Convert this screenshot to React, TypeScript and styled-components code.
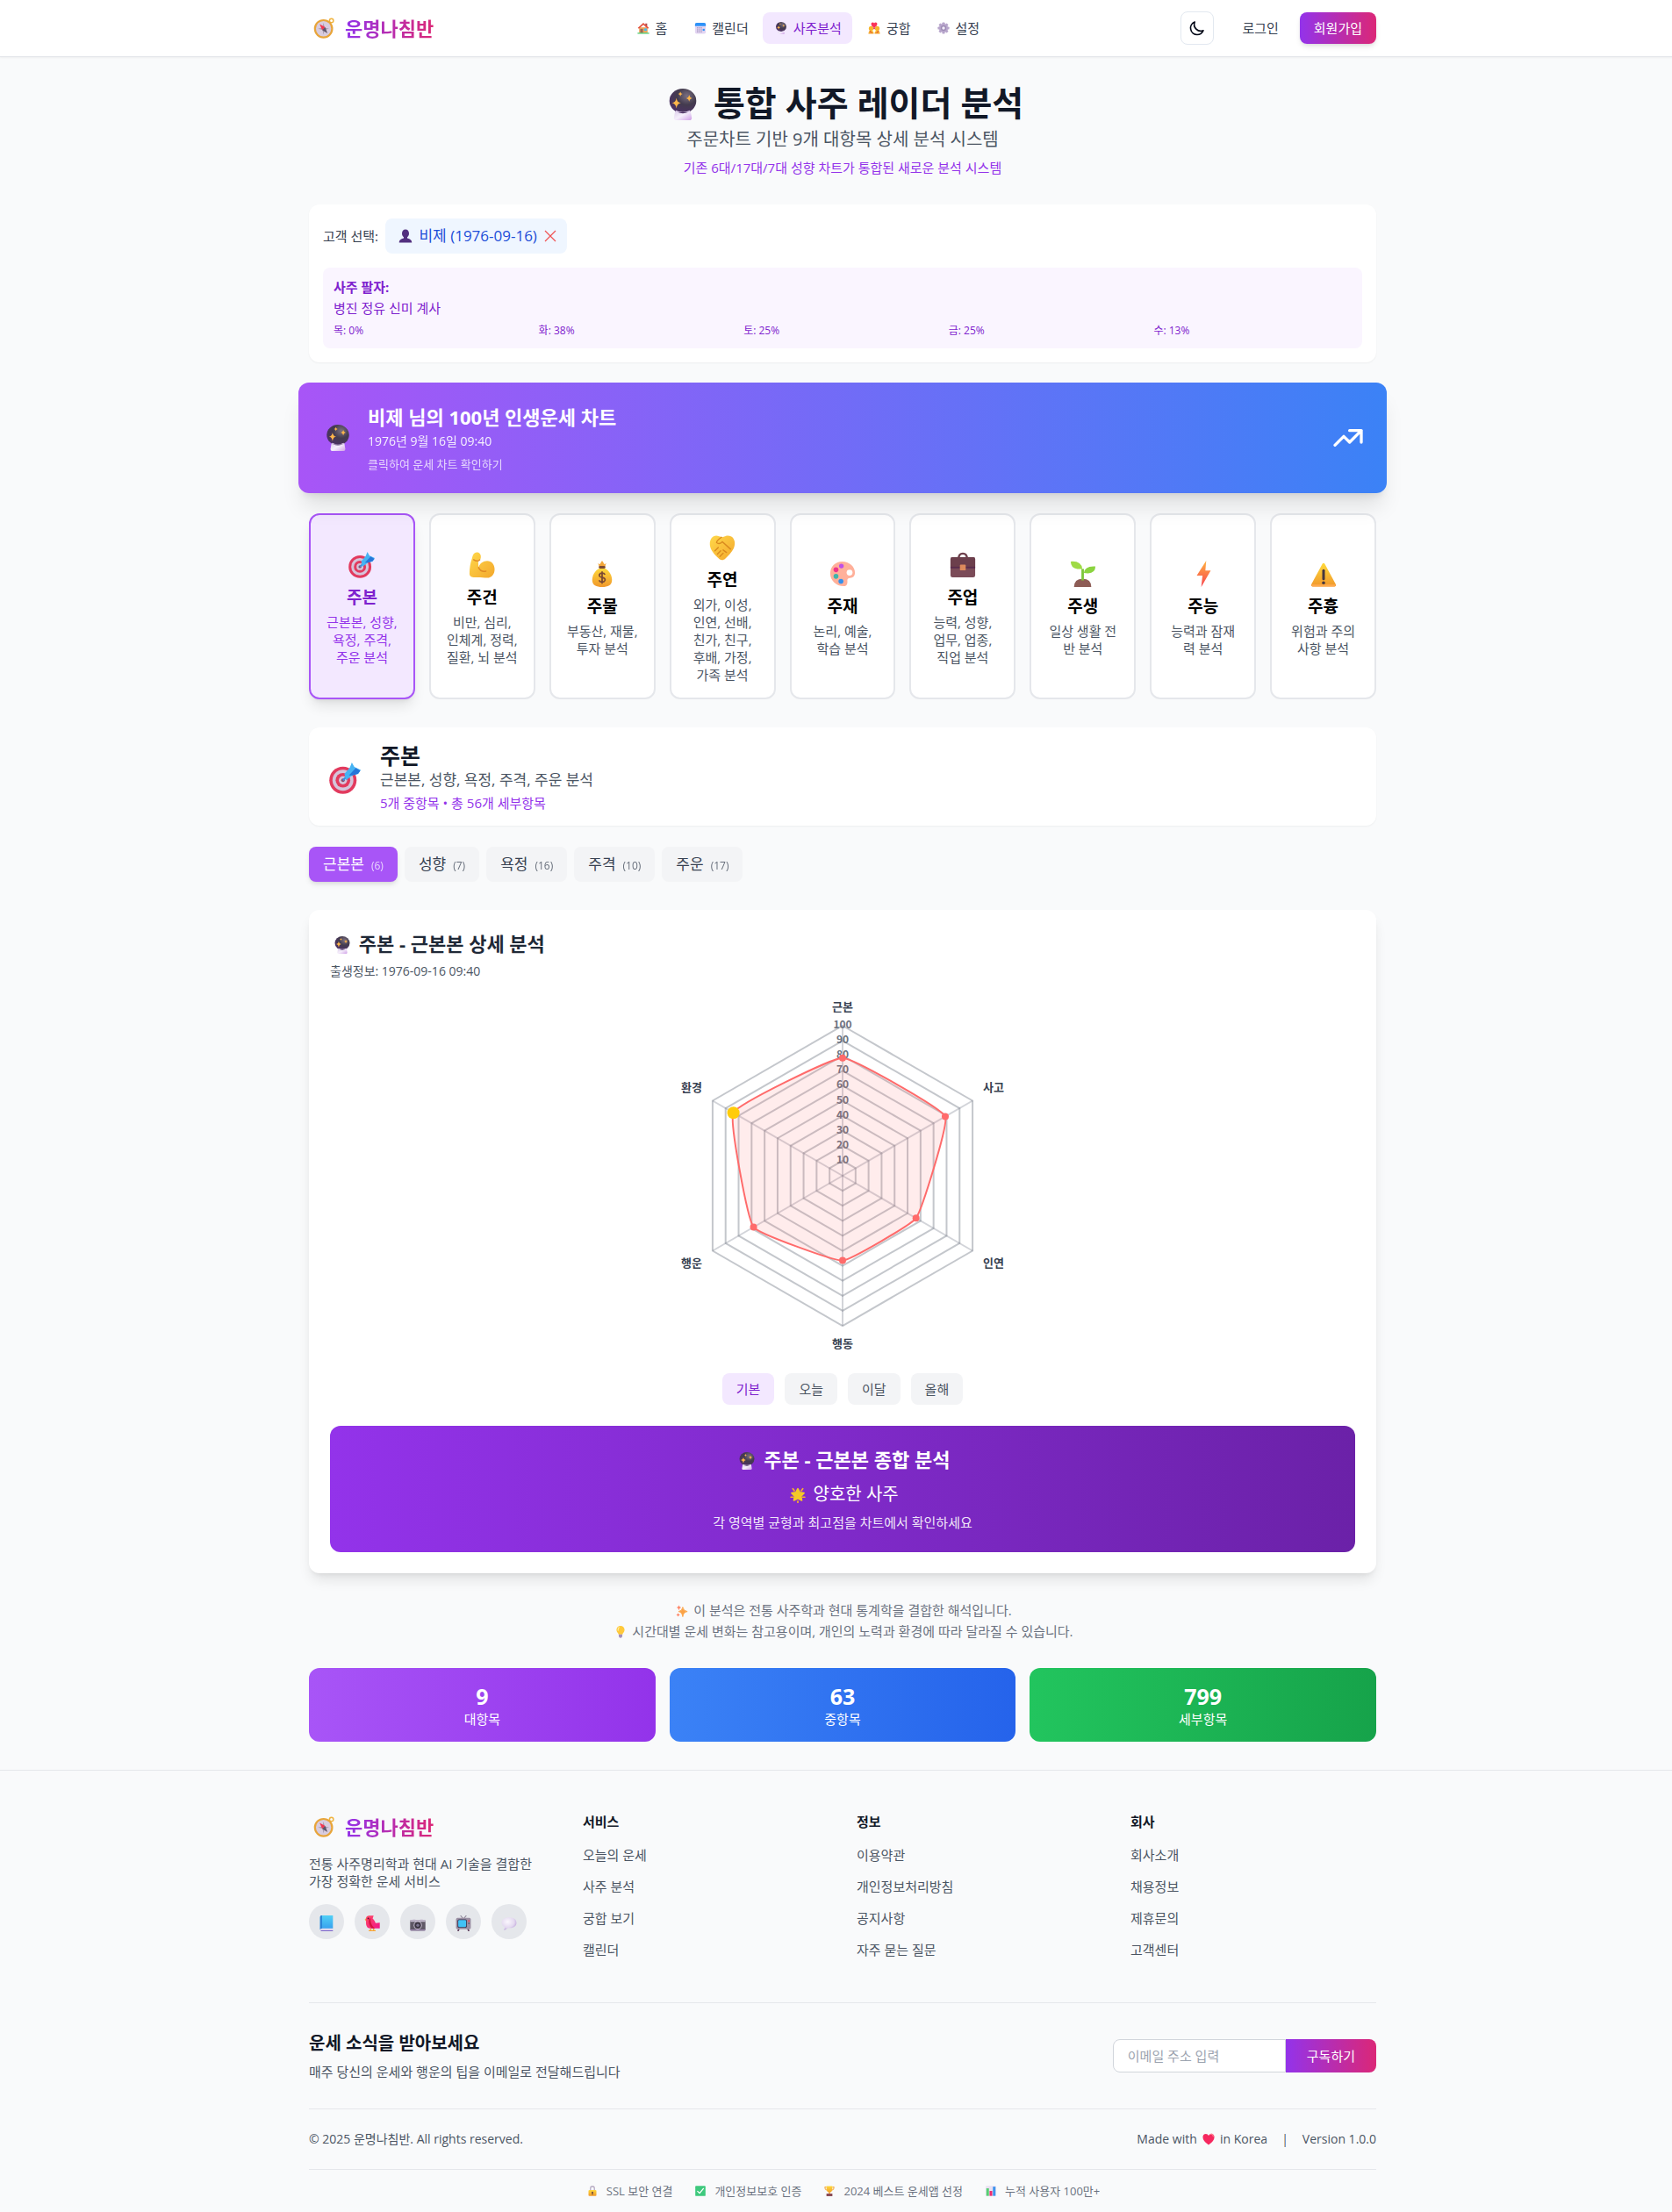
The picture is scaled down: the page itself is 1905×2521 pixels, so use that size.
import React from "react";
import styled, { createGlobalStyle, css } from "styled-components";

const sans = `"Open Sans", "Noto Sans CJK KR", sans-serif`;

const GlobalStyle = createGlobalStyle`
  *, *::before, *::after { box-sizing: border-box; }
  body {
    margin: 0;
    background: #f9fafb;
    color: #111827;
    font-family: ${sans};
    font-size: 16px;
    line-height: 24px;
    overflow-x: hidden;
  }
  h1, h2, h3, h4, p, ul { margin: 0; padding: 0; }
  ul { list-style: none; }
  a { color: inherit; text-decoration: none; }
  button, input { font: inherit; color: inherit; margin: 0; }
  button { border: 0; background: none; padding: 0; cursor: pointer; }
`;

/* ---------- emoji artwork (32 x 32 grid) ---------- */

const Defs = () => (
  <HiddenSvg aria-hidden="true">
    <defs>
      <radialGradient id="gBall" cx="0.65" cy="0.3" r="0.8">
        <stop offset="0" stopColor="#7a6f80" />
        <stop offset="0.45" stopColor="#433b4e" />
        <stop offset="1" stopColor="#4e2f69" />
      </radialGradient>
      <linearGradient id="gBase" x1="0" x2="1" y1="0" y2="1">
        <stop offset="0" stopColor="#d9c9e8" />
        <stop offset="0.5" stopColor="#f5effb" />
        <stop offset="1" stopColor="#cf9ee6" />
      </linearGradient>
      <linearGradient id="gGold" x1="0" x2="0" y1="0" y2="1">
        <stop offset="0" stopColor="#ffd93b" />
        <stop offset="1" stopColor="#f0982c" />
      </linearGradient>
      <linearGradient id="gYellow" x1="0" x2="1" y1="0" y2="1">
        <stop offset="0" stopColor="#ffd84a" />
        <stop offset="1" stopColor="#f3a72c" />
      </linearGradient>
      <linearGradient id="gBolt" x1="0" x2="0" y1="0" y2="1">
        <stop offset="0" stopColor="#ffb340" />
        <stop offset="1" stopColor="#f8424f" />
      </linearGradient>
      <linearGradient id="gBook" x1="0" x2="0" y1="0" y2="1">
        <stop offset="0" stopColor="#51d0f5" />
        <stop offset="1" stopColor="#359dee" />
      </linearGradient>
      <linearGradient id="gPink" x1="0" x2="1" y1="0" y2="1">
        <stop offset="0" stopColor="#ff4b63" />
        <stop offset="1" stopColor="#f0148a" />
      </linearGradient>
      <radialGradient id="gLilac" cx="0.4" cy="0.35" r="0.75">
        <stop offset="0" stopColor="#faf7fd" />
        <stop offset="0.6" stopColor="#e4d9f0" />
        <stop offset="1" stopColor="#b294d6" />
      </radialGradient>
    </defs>
  </HiddenSvg>
);

const art = {
  compass: (
    <>
      <circle cx="27.5" cy="4.5" r="3" fill="none" stroke="#f0b440" strokeWidth="2" />
      <circle cx="15.5" cy="17" r="14.5" fill="#e8a53a" />
      <circle cx="15.5" cy="17" r="11.6" fill="#d8ccdf" />
      <path d="M15.5 8l1.6 7.4L24 17l-6.900 1.600L15.500 26l-1.600-7.400L7 17l6.900-1.600z" fill="#a79bb0" />
      <path d="M9.500 10l8.500 4.500-4.500 4.500z" fill="#f2354f" />
      <path d="M21.500 24l-8-5 4.500-4.500z" fill="#5d5468" />
    </>
  ),
  house: (
    <>
      <path d="M21 4h5v8h-5z" fill="#b24a4a" />
      <path d="M5 14h22v15H5z" fill="#f0a75c" />
      <path d="M16 2L1.500 15.500l3 2L16 7.500l11.500 10 3-2z" fill="#e2503e" />
      <path d="M8 18h7v11H8z" fill="#9a6a58" />
      <path d="M18 17h7v6h-7z" fill="#43b9f4" />
      <path d="M1 28h30v3H1z" fill="#4fce74" />
    </>
  ),
  calendar: (
    <>
      <rect x="2" y="2" width="28" height="29" rx="4" fill="#e3d5f2" />
      <path d="M2 11V6a4 4 0 014-4h20a4 4 0 014 4v5z" fill="#2d92f8" />
      <g fill="#a596bd">
        {[14, 19, 24].map((y) => [8, 13, 18].map((x) => <rect key={`${x}-${y}`} x={x - 1} y={y} width="3" height="3" />))}
      </g>
      <rect x="22" y="18" width="5" height="5" fill="#2d92f8" />
    </>
  ),
  ball: (
    <>
      <path d="M8.500 21h15l1.500 8.500q0 2.500-2 2.500H9q-2 0-2-2.500z" fill="url(#gBase)" />
      <ellipse cx="16" cy="12.500" rx="13.600" ry="12.500" fill="url(#gBall)" />
      <path d="M9 22q7 3.500 14 0l.5 2h-15z" fill="#dccde9" />
      <path d="M9.500 9.500q.6 4.400 4.500 5-3.900.7-4.500 5.500-.7-4.800-4.500-5.500 3.800-.6 4.500-5z" fill="#fdb54a" />
      <path d="M22.500 6.500q.4 2.700 3 3.200-2.600.5-3 3.300-.5-2.800-3-3.300 2.500-.5 3-3.200z" fill="#fdb54a" />
      <path d="M13.500 3q.3 2 2.200 2.400-1.900.4-2.200 2.400-.4-2-2.200-2.400Q13.100 5 13.500 3z" fill="#fdb54a" />
    </>
  ),
  couple: (
    <>
      <circle cx="8" cy="17" r="6" fill="#f7b52c" />
      <circle cx="24" cy="17" r="6" fill="#f7b52c" />
      <path d="M1 31q0-9 7-9t7 9zM17 31q0-9 7-9t7 9z" fill="url(#gGold)" />
      <path d="M4 23l6 5M28 23l-6 5" stroke="#e6542f" strokeWidth="2.500" />
      <path d="M16 15Q8 10 8 5.500 8 1 12 1q3 0 4 2.500Q17 1 20 1q4 0 4 4.500 0 4.500-8 9.500z" fill="#fa3158" />
      <path d="M14 14h4v5h-4z" fill="#e0335a" />
    </>
  ),
  gear: (
    <>
      <g fill="#b7a5cb">
        {[0, 45, 90, 135].map((a) => (
          <rect key={a} x="12.500" y="1" width="7" height="30" rx="2" transform={`rotate(${a} 16 16)`} />
        ))}
        <circle cx="16" cy="16" r="11.500" />
      </g>
      <circle cx="16" cy="16" r="7" fill="#9a88b2" />
      <circle cx="16" cy="16" r="4" fill="#f2ecf8" />
    </>
  ),
  bust: (
    <path d="M16 1c5 0 8 3.500 8 9 0 4-1.500 7-4 8.500V21c6 1.500 10.500 4 10.500 10h-29c0-6 4.500-8.500 10.500-10v-2.500C9.500 17 8 14 8 10c0-5.500 3-9 8-9z" fill="#53307f" />
  ),
  target: (
    <>
      <circle cx="14" cy="18" r="13.800" fill="#e23a5e" />
      <circle cx="14" cy="18" r="10.600" fill="#d5c4da" />
      <circle cx="14" cy="18" r="7.400" fill="#e23a5e" />
      <circle cx="14" cy="18" r="4.200" fill="#d5c4da" />
      <circle cx="14" cy="18" r="1.800" fill="#8c4f6c" />
      <path d="M14 18L25 7" stroke="#3a8ce0" strokeWidth="2" />
      <path d="M15.500 11.500L21 5l2-5 2.500 4.500L32 7.500l-2.500 4-6 1.500-6.500 5z" fill="#47b3f3" />
      <path d="M20 13l7-7.500 4.500 3-2.500 3-5.500 1.500z" fill="#2676d9" />
    </>
  ),
  biceps: (
    <>
      <path d="M7 1.500C9 0 12 .5 13.500 2c1.500 1.500 1.500 4 1 6-.5 1.500-1.500 2-3 2L12 19c1.500-5 5.500-8 10.500-8 5.500 0 9 4.500 9 10 0 6-3.500 10.500-9 10.500-5 0-9-1-14-.5-4.500.3-7.500-1-7.500-4.500C1 20 2 13.500 4 8c.6-3 1.300-5.200 3-6.500z" fill="url(#gYellow)" />
      <path d="M12 19c2 4 5 5.500 9 4.500M6 9.500c3 2 5.500 2 7.500 0" stroke="#e08a25" strokeWidth="1.500" fill="none" strokeLinecap="round" />
    </>
  ),
  moneybag: (
    <>
      <path d="M11 3l2 1.500L16 0l3 4.500L21 3l-2 6h-6z" fill="#f2a63a" />
      <path d="M13 9C7 12 4 18 4 23.500 4 30 9 32 16 32s12-2 12-8.500C28 18 25 12 19 9z" fill="url(#gGold)" />
      <rect x="12" y="6.500" width="8" height="3" rx="1.500" fill="#7b4a33" />
      <path d="M19.500 17q-1-2-3.500-2t-3.300 2q-.7 2.700 3.300 3.400 4.300.8 3.500 3.400-1 2.200-3.500 2.200t-3.700-2.200M16 13v15" fill="none" stroke="#7b4a33" strokeWidth="1.900" />
    </>
  ),
  handshake: (
    <>
      <path d="M2.500 5C5 1.500 9 1 12 2.500l4 1 4-1.500c4-1 8.500.5 10 4 2 4 1 8.500-.5 11.500-2 4-6 8-10 12-2 2-5 2-7 .5C8 26.500 3 21 1.500 16 .3 12 .6 8 2.500 5z" fill="url(#gYellow)" />
      <path d="M15 3.500q-6 4-6 6.500 3 3 7-1l10 9M7 20l4-4M10 24l4-4M13 27l4-4M21 22l-4-3" stroke="#d98a1f" strokeWidth="1.500" fill="none" strokeLinecap="round" />
    </>
  ),
  palette: (
    <>
      <path d="M15.500 1C24 1 31 7 31 14.500c0 4.500-2.500 6.500-6 6.500-2.500 0-3.500 1.500-3.200 3.500.3 3-.3 6.500-4.300 6.500C8 31 1 24 1 15.500 1 7 7.500 1 15.500 1z" fill="#ffb09a" />
      <circle cx="24.500" cy="14.500" r="3.600" fill="#fff" />
      <circle cx="14.500" cy="6.500" r="2.900" fill="#c04fe8" />
      <circle cx="8" cy="11" r="3" fill="#f0358c" />
      <circle cx="8" cy="19" r="3" fill="#3fb4ab" />
      <circle cx="14" cy="25" r="3" fill="#3290ee" />
    </>
  ),
  briefcase: (
    <>
      <path d="M11 8q0-6 5-6t5 6" fill="none" stroke="#6e404c" strokeWidth="2.500" />
      <rect x="1" y="6.500" width="30" height="24.500" rx="2.500" fill="#7b4b58" />
      <path d="M1 9q0-2.500 2.500-2.500h25Q31 6.500 31 9v10H1z" fill="#6c3f4c" />
      <path d="M1 18h30v2H1z" fill="#5a2c4d" />
      <rect x="12.500" y="15.500" width="7" height="7" rx="1" fill="#dd8a5c" />
    </>
  ),
  seedling: (
    <>
      <path d="M5 32q0-10 10.500-10T26 32z" fill="#8d5c55" />
      <path d="M14 24V10h3v14z" fill="#7cc63a" />
      <path d="M15 10Q14 0 1 1q0 8 8 9z" fill="#9fdb45" />
      <path d="M17 15q1-9 14-8 0 8-9 8.500z" fill="#8bd440" />
    </>
  ),
  bolt: <path d="M19.500 0L8 18h7l-1.500 14L25 12h-6.500z" fill="url(#gBolt)" />,
  warning: (
    <>
      <path d="M16 3q1 0 1.500 1L31 29q.7 2-1.500 2.500h-27Q.3 31 1 29L14.500 4Q15 3 16 3z" fill="url(#gGold)" />
      <path d="M1.500 29h29q.5 2.500-1.500 2.500H3Q1 31.500 1.500 29z" fill="#ffab4f" />
      <path d="M16 12v10" stroke="#44363f" strokeWidth="3.200" strokeLinecap="round" />
      <circle cx="16" cy="27" r="1.900" fill="#44363f" />
    </>
  ),
  star: (
    <>
      <g stroke="#f6ae2e" strokeWidth="3" strokeLinecap="round">
        <path d="M6 3l3 4M26 3l-3 4M2 20h4M30 20h-4M16 31v-3" />
      </g>
      <path d="M16 3l4 7.500 8.500 1.300-6 6.200 1.500 8.500-8-4-8 4 1.500-8.500-6-6.200 8.500-1.300z" fill="#f4c928" stroke="#f4c928" strokeWidth="3" strokeLinejoin="round" />
    </>
  ),
  sparkles: (
    <>
      <path d="M18 6q1.500 10 12 11.500Q19.500 19 18 31q-1.500-12-11-13.500Q16.500 16 18 6z" fill="#fba346" stroke="#fba346" strokeWidth="2" />
      <path d="M8 1q1 5 6 6-5 1-6 7-1-6-6-7 5-1 6-6zM6 21q.7 4 5 5-4.300.8-5 5-.7-4.200-5-5 4.300-1 5-5z" fill="#ff8263" />
    </>
  ),
  bulb: (
    <>
      <path d="M16 0c6 0 10.500 4.500 10.500 10 0 5-3.500 7-5.500 12H11C9 17 5.500 15 5.500 10 5.500 4.500 10 0 16 0z" fill="#ffc93b" />
      <path d="M12 4q-3 3-2.500 8" stroke="#fff0a8" strokeWidth="2.500" fill="none" strokeLinecap="round" />
      <path d="M11 22h10l-1 7q-4 5-8 0z" fill="#a58fb8" />
    </>
  ),
  book: (
    <>
      <path d="M3 28q0-2 2-2h24v5H5q-2 0-2-2z" fill="#ded6ef" />
      <path d="M3 3q0-3 3-3h23v26H6q-3 0-3 3z" fill="url(#gBook)" />
      <path d="M3 3q0-3 3-3h1v26q-4 0-4 3z" fill="#2a83d6" />
      <path d="M4 30h25v2H5z" fill="#7a64c8" />
    </>
  ),
  bird: (
    <>
      <path d="M5 4L1 8.500 4 12z" fill="#f7a637" />
      <path d="M13 26v4M19 26v4M9 31h14" stroke="#f7a637" strokeWidth="2.400" fill="none" />
      <path d="M10 .5h9L17 6c3 3 5 6 6 9.500l8.500-1V26H12C6 26 3.500 21 3.500 14V6C4 2.500 6.500.5 10 .5z" fill="url(#gPink)" />
      <path d="M10 6c-2 7-.5 14 5 20h7C16 22 12 14 13 6z" fill="#d5123f" />
      <circle cx="8" cy="6" r="1.500" fill="#4a1030" />
    </>
  ),
  camera: (
    <>
      <path d="M5 10l1-2h5l1 2zM20 10l1-2h5l1 2z" fill="#cfc6d8" />
      <rect x="0.500" y="9.500" width="31" height="21.500" rx="2" fill="#5f5866" />
      <path d="M.5 13V11.500q0-2 2-2h27q2 0 2 2V13z" fill="#c8bfd3" />
      <path d="M.5 29h31v1.500H.5z" fill="#b79ad0" />
      <circle cx="16" cy="20" r="8.500" fill="#bbb1c4" />
      <circle cx="16" cy="20" r="6.500" fill="#3b3542" />
      <circle cx="16" cy="20" r="3" fill="#7c7490" />
    </>
  ),
  tv: (
    <>
      <path d="M10 0l5 6M22 0l-5 6" stroke="#8f8699" strokeWidth="1.800" />
      <path d="M7 27l-2 5M25 27l2 5" stroke="#5e3f5c" strokeWidth="3" />
      <rect x="1" y="5" width="30" height="23" rx="3" fill="#9b8fa3" />
      <rect x="4" y="8" width="19" height="17" rx="3" fill="#3c3550" />
      <rect x="5.500" y="9.500" width="16" height="14" rx="2" fill="#41c1f5" />
      <circle cx="27" cy="11" r="1.700" fill="#f04257" />
      <circle cx="27" cy="16" r="1.500" fill="#574e63" />
    </>
  ),
  bubble: (
    <path d="M16 4c9 0 15 4.500 15 11s-6 10.500-14 10.500c-2 0-3.500 0-5 .5-1.500 2-4 3.500-7 3.500 2-2 2.300-4 2-6-4-2-6-5-6-8.500C1 8.500 7 4 16 4z" fill="url(#gLilac)" />
  ),
  heart: (
    <>
      <path d="M16 31Q1 21 1 11 1 2 9 2q5 0 7 5 2-5 7-5 8 0 8 9 0 10-15 20z" fill="#f6285f" />
      <path d="M22 3q5-1 6 5" stroke="#ff7d8f" strokeWidth="3" fill="none" strokeLinecap="round" />
    </>
  ),
  lock: (
    <>
      <path d="M10 14V8q0-6 6-6t6 6v6" fill="none" stroke="#b9adc4" strokeWidth="3.500" />
      <rect x="4" y="13" width="24" height="18.500" rx="3" fill="url(#gGold)" />
      <path d="M16 18a2.500 2.500 0 011.500 4.500V27h-3v-4.500A2.500 2.500 0 0116 18z" fill="#5c3b3f" />
    </>
  ),
  check: (
    <>
      <rect x="0.500" y="0.500" width="31" height="31" rx="2.500" fill="#3ec97d" />
      <path d="M7.500 17l6 6L25 9" fill="none" stroke="#fff" strokeWidth="3.500" strokeLinecap="round" strokeLinejoin="round" />
    </>
  ),
  trophy: (
    <>
      <path d="M7 4H2q0 10 7 10M25 4h5q0 10-7 10" fill="none" stroke="#f2a02f" strokeWidth="2.500" />
      <path d="M7 1h18v9q-1 9-7 10v4h-4v-4q-6-1-7-10z" fill="url(#gGold)" />
      <path d="M7 24h18v8H7z" fill="#8c4d55" />
    </>
  ),
  bars: (
    <>
      <rect x="0.500" y="0.500" width="31" height="31" rx="2" fill="#e9e0f2" />
      <rect x="2" y="8" width="8" height="23" fill="#57cf73" />
      <rect x="12" y="16" width="8" height="15" fill="#ee2c6e" />
      <rect x="22" y="3" width="8" height="28" fill="#3d94ee" />
    </>
  ),
};

type EmojiName = keyof typeof art;

const HiddenSvg = styled.svg`
  position: absolute;
  width: 0;
  height: 0;
`;

const EmojiCell = styled.span<{ $size: number }>`
  display: inline-flex;
  flex: none;
  justify-content: center;
  width: ${(p) => Math.round(p.$size * 1.37)}px;
  height: ${(p) => p.$size}px;
  vertical-align: -${(p) => Math.round(p.$size * 0.14)}px;
  svg { width: ${(p) => p.$size}px; height: ${(p) => p.$size}px; }
`;

const Emoji = ({ name, size }: { name: EmojiName; size: number }) => (
  <EmojiCell $size={size} aria-hidden="true">
    <svg viewBox="0 0 32 32">{art[name]}</svg>
  </EmojiCell>
);

/* ---------- shared pieces ---------- */

const Page = styled.div`
  margin-right: -15px;
`;

const Container = styled.div`
  max-width: 1280px;
  margin: 0 auto;
  padding: 0 32px;
`;

const Small = styled.p<{ $color?: string; $top?: number; $bold?: boolean; $size?: number }>`
  font-size: ${(p) => p.$size ?? 15}px;
  line-height: 20px;
  margin-top: ${(p) => p.$top ?? 0}px;
  color: ${(p) => p.$color ?? "inherit"};
  font-weight: ${(p) => (p.$bold ? 700 : 400)};
  word-break: keep-all;
`;

const brand = "linear-gradient(to right, #9333ea, #db2777)";

/* ---------- header ---------- */

const Header = styled.header`
  background: #fff;
  border-bottom: 1px solid #e5e7eb;
  box-shadow: 0 1px 2px rgba(0, 0, 0, 0.05);
`;

const HeaderRow = styled(Container)`
  display: flex;
  align-items: center;
  justify-content: space-between;
  height: 64px;
`;

const LogoLink = styled.a`
  display: flex;
  align-items: center;
  gap: 8px;
  height: 32px;
`;

const LogoText = styled.span`
  font-size: 22px;
  line-height: 28px;
  font-weight: 700;
  color: transparent;
  background: ${brand};
  background-clip: text;
  -webkit-background-clip: text;
`;

const Logo = () => (
  <LogoLink href="#">
    <Emoji name="compass" size={24} />
    <LogoText>운명나침반</LogoText>
  </LogoLink>
);

const Nav = styled.nav`
  display: flex;
  gap: 4px;
`;

const NavLink = styled.a<{ $active?: boolean }>`
  display: flex;
  align-items: center;
  gap: 4px;
  padding: 8px 12px;
  border-radius: 8px;
  font-size: 15px;
  line-height: 20px;
  color: ${(p) => (p.$active ? "#7e22ce" : "#374151")};
  background: ${(p) => (p.$active ? "#f3e8ff" : "transparent")};
`;

const Actions = styled.div`
  display: flex;
  align-items: center;
  gap: 8px;
`;

const ThemeToggle = styled.button`
  display: flex;
  align-items: center;
  justify-content: center;
  width: 38px;
  height: 38px;
  margin-right: 8px;
  border: 1px solid #e2e8f0;
  border-radius: 8px;
  color: #020817;
`;

const LoginLink = styled.a`
  padding: 8px 16px;
  font-size: 15px;
  line-height: 20px;
  color: #374151;
`;

const SignupLink = styled(LoginLink)`
  border-radius: 8px;
  color: #fff;
  background: ${brand};
  box-shadow: 0 4px 6px -1px rgba(0, 0, 0, 0.1), 0 2px 4px -2px rgba(0, 0, 0, 0.1);
`;

/* ---------- main ---------- */

const Main = styled.main`
  padding: 32px 0;
`;

const Intro = styled.div`
  text-align: center;
  margin-bottom: 32px;
`;

const PageTitle = styled.h1`
  font-size: 39px;
  line-height: 40px;
  font-weight: 700;
  color: #111827;
`;

const Lead = styled.p`
  margin-top: 8px;
  font-size: 20px;
  line-height: 28px;
  color: #4b5563;
`;

const Card = styled.section`
  padding: 16px;
  border-radius: 12px;
  background: #fff;
  box-shadow: 0 1px 2px rgba(0, 0, 0, 0.05);
`;

const CustomerRow = styled.div`
  display: flex;
  align-items: center;
  gap: 8px;
`;

const Chip = styled.div`
  display: flex;
  align-items: center;
  padding: 8px 12px;
  border-radius: 8px;
  font-size: 17px;
  background: #eff6ff;
  color: #1d4ed8;
`;

const ChipClose = styled.button`
  display: flex;
  margin-left: 8px;
  color: #f05252;
`;

const Pillars = styled.div`
  margin-top: 16px;
  padding: 12px;
  border-radius: 8px;
  background: #faf5ff;
  color: #7e22ce;
`;

const ElementGrid = styled.div`
  display: grid;
  grid-template-columns: repeat(5, 1fr);
  gap: 8px;
  margin-top: 8px;
  font-size: 12px;
  line-height: 16px;
`;

const Banner = styled.button`
  position: relative;
  z-index: 1;
  display: flex;
  align-items: center;
  gap: 14px;
  width: calc(100% + 24px);
  margin: 23px -12px;
  padding: 25px 24px;
  border-radius: 12px;
  color: #fff;
  text-align: left;
  background: linear-gradient(to right, #a855f7, #3b82f6);
  box-shadow: 0 20px 25px -5px rgba(0, 0, 0, 0.1), 0 8px 10px -6px rgba(0, 0, 0, 0.1);
  & > svg { flex: none; width: 40px; height: 40px; }
`;

const BannerText = styled.span`
  display: flex;
  flex: 1;
  flex-direction: column;
`;

const BannerTitle = styled.span`
  font-size: 22px;
  line-height: 28px;
  font-weight: 700;
`;

const BannerDate = styled.span`
  margin-top: 4px;
  font-size: 14px;
  line-height: 20px;
  opacity: 0.9;
`;

const BannerHint = styled.span`
  margin-top: 8px;
  font-size: 13px;
  line-height: 16px;
  opacity: 0.75;
`;

const CategoryGrid = styled.div`
  display: grid;
  grid-template-columns: repeat(9, minmax(0, 1fr));
  gap: 16px;
  margin-bottom: 32px;
`;

const CategoryButton = styled.button<{ $active: boolean }>`
  display: flex;
  flex-direction: column;
  align-items: center;
  justify-content: center;
  padding: 16px 17px;
  border: 2px solid ${(p) => (p.$active ? "#a855f7" : "#e5e7eb")};
  border-radius: 12px;
  background: ${(p) => (p.$active ? "#f3e8ff" : "#fff")};
  color: ${(p) => (p.$active ? "#9333ea" : "#4b5563")};
  text-align: center;
  ${(p) =>
    p.$active &&
    css`
      box-shadow: 0 10px 15px -3px rgba(0, 0, 0, 0.1), 0 4px 6px -4px rgba(0, 0, 0, 0.1);
    `}
`;

const EmojiLine = styled.span`
  display: flex;
  align-items: flex-end;
  height: 36px;
  margin-bottom: 8px;
`;

const CategoryName = styled.span<{ $active: boolean }>`
  margin-bottom: 4px;
  font-size: 19px;
  line-height: 28px;
  font-weight: 700;
  color: ${(p) => (p.$active ? "#7e22ce" : "#000")};
`;

const CategoryText = styled.span`
  font-size: 15px;
  line-height: 20px;
`;

const DetailCard = styled(Card)`
  display: flex;
  align-items: center;
  gap: 16px;
  margin-bottom: 24px;
`;

const DetailEmoji = styled.div`
  display: flex;
  align-items: flex-end;
  height: 40px;
`;

const DetailTitle = styled.h2`
  font-size: 25px;
  line-height: 32px;
  font-weight: 700;
`;

const DetailText = styled.p`
  font-size: 17px;
  color: #4b5563;
`;

const Tabs = styled.div`
  display: flex;
  gap: 8px;
  margin-bottom: 32px;
`;

const Tab = styled.button<{ $active: boolean }>`
  display: flex;
  align-items: baseline;
  gap: 8px;
  padding: 8px 16px;
  border-radius: 8px;
  font-size: 17px;
  line-height: 24px;
  color: ${(p) => (p.$active ? "#fff" : "#374151")};
  background: ${(p) => (p.$active ? "#a855f7" : "#f3f4f6")};
  box-shadow: ${(p) =>
    p.$active ? "0 4px 6px -1px rgba(0, 0, 0, 0.1), 0 2px 4px -2px rgba(0, 0, 0, 0.1)" : "none"};
`;

const TabCount = styled.span`
  font-size: 12px;
  line-height: 16px;
  opacity: 0.75;
`;

const Analysis = styled(Card)`
  padding: 24px;
  box-shadow: 0 10px 15px -3px rgba(0, 0, 0, 0.1), 0 4px 6px -4px rgba(0, 0, 0, 0.1);
`;

const SectionTitle = styled.h3`
  font-size: 22px;
  line-height: 28px;
  font-weight: 700;
`;

const AnalysisTitle = styled(SectionTitle)`
  color: #1f2937;
`;

const ChartBox = styled.div`
  display: flex;
  justify-content: center;
  margin: 24px 0;
  svg { display: block; width: 400px; height: 400px; overflow: visible; }
`;

const Periods = styled.div`
  display: flex;
  justify-content: center;
  gap: 12px;
`;

const Period = styled.button<{ $active: boolean }>`
  padding: 8px 16px;
  border-radius: 8px;
  font-size: 15px;
  line-height: 20px;
  color: ${(p) => (p.$active ? "#7e22ce" : "#4b5563")};
  background: ${(p) => (p.$active ? "#f3e8ff" : "#f3f4f6")};
`;

const Summary = styled.div`
  margin-top: 24px;
  padding: 24px;
  border-radius: 12px;
  text-align: center;
  color: #fff;
  background: linear-gradient(to right, #9333ea, #6b21a8);
`;

const SummaryGrade = styled.p`
  margin-top: 12px;
  font-size: 20px;
  line-height: 28px;
`;

const Notes = styled.div`
  margin: 32px 0;
  text-align: center;
`;

const Stats = styled.div`
  display: grid;
  grid-template-columns: repeat(3, 1fr);
  gap: 16px;
`;

const Stat = styled.div<{ $from: string; $to: string }>`
  padding: 16px;
  border-radius: 12px;
  text-align: center;
  color: #fff;
  background: linear-gradient(to right, ${(p) => p.$from}, ${(p) => p.$to});
`;

const StatNumber = styled.div`
  font-size: 25px;
  line-height: 32px;
  font-weight: 700;
`;

/* ---------- footer ---------- */

const Footer = styled.footer`
  border-top: 1px solid #e5e7eb;
  padding: 48px 0 16px;
`;

const FooterColumns = styled.div`
  display: grid;
  grid-template-columns: repeat(4, 1fr);
  gap: 32px;
  padding-bottom: 48px;
`;

const Socials = styled.div`
  display: flex;
  gap: 12px;
  margin-top: 16px;
`;

const Social = styled.a`
  display: flex;
  align-items: center;
  justify-content: center;
  width: 40px;
  height: 40px;
  padding-top: 4px;
  border-radius: 50%;
  background: #e5e7eb;
`;

const FooterHeading = styled.h3`
  margin-bottom: 16px;
  font-size: 15px;
  line-height: 20px;
  font-weight: 700;
`;

const FooterList = styled.ul`
  display: grid;
  gap: 12px;
  font-size: 15px;
  line-height: 24px;
  color: #4b5563;
`;

const FooterRow = styled.div<{ $pad: number }>`
  display: flex;
  align-items: center;
  justify-content: space-between;
  padding: ${(p) => p.$pad}px 0;
  border-top: 1px solid #e5e7eb;
`;

const NewsTitle = styled.h3`
  font-size: 20px;
  line-height: 28px;
  font-weight: 700;
`;

const NewsForm = styled.form`
  display: flex;
`;

const EmailInput = styled.input`
  width: 197px;
  padding: 8px 16px;
  border: 1px solid #d1d5db;
  border-radius: 8px 0 0 8px;
  background: #fff;
  font-size: 15px;
  line-height: 20px;
  &::placeholder { color: #9ca3af; opacity: 1; }
`;

const SubscribeButton = styled.button`
  padding: 8px 24px;
  border-radius: 0 8px 8px 0;
  font-size: 15px;
  line-height: 20px;
  color: #fff;
  background: ${brand};
`;

const Credits = styled.div`
  display: flex;
  gap: 16px;
  font-size: 14px;
  line-height: 20px;
  color: #4b5563;
`;

const Trust = styled.div`
  display: flex;
  justify-content: center;
  gap: 24px;
  padding-top: 16px;
  border-top: 1px solid #e5e7eb;
`;

const TrustItem = styled.span`
  display: flex;
  align-items: center;
  gap: 8px;
  font-size: 13px;
  line-height: 16px;
  color: #6b7280;
`;

/* ---------- radar chart ---------- */

const radar = [
  { label: "근본", value: 78.5 },
  { label: "사고", value: 79 },
  { label: "인연", value: 56.5 },
  { label: "행동", value: 56.5 },
  { label: "행운", value: 68.5 },
  { label: "환경", value: 84 },
];
const CX = 200;
const CY = 199;
const R = 171;
const TENSION = 0.1;

const polar = (i: number, r: number) => {
  const a = (Math.PI / 3) * i - Math.PI / 2;
  return [CX + r * Math.cos(a), CY + r * Math.sin(a)] as const;
};

const smoothPath = () => {
  const pts = radar.map((d, i) => polar(i, (R * d.value) / 100));
  const n = pts.length;
  const dist = (a: readonly number[], b: readonly number[]) => Math.hypot(a[0] - b[0], a[1] - b[1]);
  const ctrl = pts.map((p, i) => {
    const prev = pts[(i + n - 1) % n];
    const next = pts[(i + 1) % n];
    const a = dist(prev, p);
    const b = dist(p, next);
    const fa = (TENSION * a) / (a + b);
    const fb = (TENSION * b) / (a + b);
    const dx = next[0] - prev[0];
    const dy = next[1] - prev[1];
    return { before: [p[0] - fa * dx, p[1] - fa * dy], after: [p[0] + fb * dx, p[1] + fb * dy] };
  });
  return (
    `M${pts[0].join(" ")}` +
    pts
      .map((_, i) => {
        const j = (i + 1) % n;
        return `C${ctrl[i].after.join(" ")} ${ctrl[j].before.join(" ")} ${pts[j].join(" ")}`;
      })
      .join("") +
    "Z"
  );
};

const labelSpots = [
  { x: 200, y: 11, anchor: "middle" },
  { x: 360, y: 103, anchor: "start" },
  { x: 360, y: 303, anchor: "start" },
  { x: 200, y: 395, anchor: "middle" },
  { x: 40, y: 303, anchor: "end" },
  { x: 40, y: 103, anchor: "end" },
] as const;

const AxisLabel = styled.text`
  font: 700 13px "Noto Sans CJK KR", sans-serif;
  fill: #374151;
`;

const TickLabel = styled.text`
  font: 700 12px "Noto Sans CJK KR", sans-serif;
  fill: #6b7280;
  text-anchor: middle;
`;

const RadarChart = () => (
  <svg viewBox="0 0 400 400" role="img" aria-label="주본 - 근본본">
    <g fill="none" stroke="#6b7280">
      {[10, 20, 30, 40, 50, 60, 70, 80, 90, 100].map((v) => (
        <polygon
          key={v}
          points={radar.map((_, i) => polar(i, (R * v) / 100).join(",")).join(" ")}
          strokeOpacity="0.4"
          strokeWidth="2"
        />
      ))}
      {radar.map((d, i) => {
        const [x, y] = polar(i, R);
        return <line key={d.label} x1={CX} y1={CY} x2={x} y2={y} strokeOpacity="0.3" strokeWidth="2" />;
      })}
    </g>
    {[10, 20, 30, 40, 50, 60, 70, 80, 90, 100].map((v) => (
      <TickLabel key={v} x={CX} y={CY - (R * v) / 100 + 3}>
        {v}
      </TickLabel>
    ))}
    <path d={smoothPath()} fill="#ff6b6b" fillOpacity="0.13" stroke="#ff6b6b" strokeWidth="2" />
    {radar.map((d, i) => {
      const [x, y] = polar(i, (R * d.value) / 100);
      const top = d.label === "환경";
      return <circle key={d.label} cx={x} cy={y} r={top ? 7 : 4} fill={top ? "#ffcc0a" : "#ff6b6b"} />;
    })}
    {radar.map((d, i) => (
      <AxisLabel key={d.label} x={labelSpots[i].x} y={labelSpots[i].y} textAnchor={labelSpots[i].anchor}>
        {d.label}
      </AxisLabel>
    ))}
  </svg>
);

/* ---------- data ---------- */

const navItems: { icon: EmojiName; label: string; active?: boolean }[] = [
  { icon: "house", label: "홈" },
  { icon: "calendar", label: "캘린더" },
  { icon: "ball", label: "사주분석", active: true },
  { icon: "couple", label: "궁합" },
  { icon: "gear", label: "설정" },
];

const categories: { icon: EmojiName; name: string; text: string }[] = [
  { icon: "target", name: "주본", text: "근본본, 성향, 욕정, 주격, 주운 분석" },
  { icon: "biceps", name: "주건", text: "비만, 심리, 인체계, 정력, 질환, 뇌 분석" },
  { icon: "moneybag", name: "주물", text: "부동산, 재물, 투자 분석" },
  { icon: "handshake", name: "주연", text: "외가, 이성, 인연, 선배, 친가, 친구, 후배, 가정, 가족 분석" },
  { icon: "palette", name: "주재", text: "논리, 예술, 학습 분석" },
  { icon: "briefcase", name: "주업", text: "능력, 성향, 업무, 업종, 직업 분석" },
  { icon: "seedling", name: "주생", text: "일상 생활 전반 분석" },
  { icon: "bolt", name: "주능", text: "능력과 잠재력 분석" },
  { icon: "warning", name: "주흉", text: "위험과 주의사항 분석" },
];

const tabs: [string, number][] = [["근본본", 6], ["성향", 7], ["욕정", 16], ["주격", 10], ["주운", 17]];

const stats = [
  { n: 9, label: "대항목", from: "#a855f7", to: "#9333ea" },
  { n: 63, label: "중항목", from: "#3b82f6", to: "#2563eb" },
  { n: 799, label: "세부항목", from: "#22c55e", to: "#16a34a" },
];

const footerLinks = [
  { title: "서비스", links: ["오늘의 운세", "사주 분석", "궁합 보기", "캘린더"] },
  { title: "정보", links: ["이용약관", "개인정보처리방침", "공지사항", "자주 묻는 질문"] },
  { title: "회사", links: ["회사소개", "채용정보", "제휴문의", "고객센터"] },
];

const socials: { icon: EmojiName; label: string }[] = [
  { icon: "book", label: "Facebook" },
  { icon: "bird", label: "Twitter" },
  { icon: "camera", label: "Instagram" },
  { icon: "tv", label: "YouTube" },
  { icon: "bubble", label: "KakaoTalk" },
];

const trust: { icon: EmojiName; label: string }[] = [
  { icon: "lock", label: "SSL 보안 연결" },
  { icon: "check", label: "개인정보보호 인증" },
  { icon: "trophy", label: "2024 베스트 운세앱 선정" },
  { icon: "bars", label: "누적 사용자 100만+" },
];

export default function App() {
  return (
    <Page>
      <GlobalStyle />
      <Defs />
      <Header>
        <HeaderRow>
          <Logo />
          <Nav>
            {navItems.map((item) => (
              <NavLink key={item.label} href="#" $active={item.active}>
                <Emoji name={item.icon} size={14} />
                {item.label}
              </NavLink>
            ))}
          </Nav>
          <Actions>
            <ThemeToggle type="button" aria-label="테마 전환">
              <svg width="20" height="20" viewBox="0 0 24 24" fill="none" stroke="currentColor" strokeWidth="2" strokeLinecap="round" strokeLinejoin="round">
                <path d="M20.354 15.354A9 9 0 018.646 3.646 9.003 9.003 0 0012 21a9.003 9.003 0 008.354-5.646z" />
              </svg>
            </ThemeToggle>
            <LoginLink href="#">로그인</LoginLink>
            <SignupLink href="#">회원가입</SignupLink>
          </Actions>
        </HeaderRow>
      </Header>

      <Main>
        <Container>
          <Intro>
            <PageTitle>
              <Emoji name="ball" size={36} /> 통합 사주 레이더 분석
            </PageTitle>
            <Lead>주문차트 기반 9개 대항목 상세 분석 시스템</Lead>
            <Small $top={8} $color="#9333ea">기존 6대/17대/7대 성향 차트가 통합된 새로운 분석 시스템</Small>
          </Intro>

          <Card>
            <CustomerRow>
              <Small $color="#374151">고객 선택:</Small>
              <Chip>
                <span>
                  <Emoji name="bust" size={16} /> 비제 (1976-09-16)
                </span>
                <ChipClose type="button" aria-label="선택 해제">
                  <svg width="14" height="14" viewBox="0 0 14 14" stroke="currentColor" strokeWidth="1.200">
                    <path d="M1 1l12 12M13 1L1 13" />
                  </svg>
                </ChipClose>
              </Chip>
            </CustomerRow>
            <Pillars>
              <Small $bold>사주 팔자:</Small>
              <Small $top={4}>병진 정유 신미 계사</Small>
              <ElementGrid>
                {["목: 0%", "화: 38%", "토: 25%", "금: 25%", "수: 13%"].map((t) => (
                  <span key={t}>{t}</span>
                ))}
              </ElementGrid>
            </Pillars>
          </Card>

          <Banner type="button">
            <Emoji name="ball" size={30} />
            <BannerText>
              <BannerTitle>비제 님의 100년 인생운세 차트</BannerTitle>
              <BannerDate>1976년 9월 16일 09:40</BannerDate>
              <BannerHint>클릭하여 운세 차트 확인하기</BannerHint>
            </BannerText>
            <svg viewBox="0 0 24 24" fill="none" stroke="currentColor" strokeWidth="2" strokeLinecap="round" strokeLinejoin="round" aria-hidden="true">
              <path d="M13 7h8m0 0v8m0-8l-8 8-4-4-6 6" />
            </svg>
          </Banner>

          <CategoryGrid>
            {categories.map((c, i) => (
              <CategoryButton key={c.name} type="button" $active={i === 0}>
                <EmojiLine>
                  <Emoji name={c.icon} size={30} />
                </EmojiLine>
                <CategoryName $active={i === 0}>{c.name}</CategoryName>
                <CategoryText>{c.text}</CategoryText>
              </CategoryButton>
            ))}
          </CategoryGrid>

          <DetailCard>
            <DetailEmoji>
              <Emoji name="target" size={36} />
            </DetailEmoji>
            <div>
              <DetailTitle>주본</DetailTitle>
              <DetailText>근본본, 성향, 욕정, 주격, 주운 분석</DetailText>
              <Small $top={4} $color="#9333ea">5개 중항목 • 총 56개 세부항목</Small>
            </div>
          </DetailCard>

          <Tabs>
            {tabs.map(([label, count], i) => (
              <Tab key={label} type="button" $active={i === 0}>
                {label}
                <TabCount>({count})</TabCount>
              </Tab>
            ))}
          </Tabs>

          <Analysis>
            <AnalysisTitle>
              <Emoji name="ball" size={20} /> 주본 - 근본본 상세 분석
            </AnalysisTitle>
            <Small $top={8} $color="#4b5563" $size={14}>출생정보: 1976-09-16 09:40</Small>
            <ChartBox>
              <RadarChart />
            </ChartBox>
            <Periods>
              {["기본", "오늘", "이달", "올해"].map((p, i) => (
                <Period key={p} type="button" $active={i === 0}>
                  {p}
                </Period>
              ))}
            </Periods>
            <Summary>
              <SectionTitle>
                <Emoji name="ball" size={20} /> 주본 - 근본본 종합 분석
              </SectionTitle>
              <SummaryGrade>
                <Emoji name="star" size={18} /> 양호한 사주
              </SummaryGrade>
              <Small $top={8} $color="rgba(255, 255, 255, 0.9)">각 영역별 균형과 최고점을 차트에서 확인하세요</Small>
            </Summary>
          </Analysis>

          <Notes>
            <Small $color="#6b7280">
              <Emoji name="sparkles" size={14} /> 이 분석은 전통 사주학과 현대 통계학을 결합한 해석입니다.
            </Small>
            <Small $top={4} $color="#6b7280">
              <Emoji name="bulb" size={14} /> 시간대별 운세 변화는 참고용이며, 개인의 노력과 환경에 따라 달라질 수 있습니다.
            </Small>
          </Notes>

          <Stats>
            {stats.map((s) => (
              <Stat key={s.n} $from={s.from} $to={s.to}>
                <StatNumber>{s.n}</StatNumber>
                <Small>{s.label}</Small>
              </Stat>
            ))}
          </Stats>
        </Container>
      </Main>

      <Footer>
        <Container>
          <FooterColumns>
            <div>
              <Logo />
              <Small $top={16} $color="#4b5563">전통 사주명리학과 현대 AI 기술을 결합한 가장 정확한 운세 서비스</Small>
              <Socials>
                {socials.map((s) => (
                  <Social key={s.icon} href="#" aria-label={s.label}>
                    <Emoji name={s.icon} size={18} />
                  </Social>
                ))}
              </Socials>
            </div>
            {footerLinks.map((col) => (
              <div key={col.title}>
                <FooterHeading>{col.title}</FooterHeading>
                <FooterList>
                  {col.links.map((l) => (
                    <li key={l}>
                      <a href="#">{l}</a>
                    </li>
                  ))}
                </FooterList>
              </div>
            ))}
          </FooterColumns>

          <FooterRow $pad={32}>
            <div>
              <NewsTitle>운세 소식을 받아보세요</NewsTitle>
              <Small $top={8} $color="#4b5563">매주 당신의 운세와 행운의 팁을 이메일로 전달해드립니다</Small>
            </div>
            <NewsForm>
              <EmailInput type="email" placeholder="이메일 주소 입력" aria-label="이메일 주소" />
              <SubscribeButton type="button">구독하기</SubscribeButton>
            </NewsForm>
          </FooterRow>

          <FooterRow $pad={24}>
            <Small $color="#4b5563" $size={14}>© 2025 운명나침반. All rights reserved.</Small>
            <Credits>
              <span>
                Made with <Emoji name="heart" size={14} /> in Korea
              </span>
              <span>|</span>
              <span>Version 1.0.0</span>
            </Credits>
          </FooterRow>

          <Trust>
            {trust.map((t) => (
              <TrustItem key={t.icon}>
                <Emoji name={t.icon} size={12} />
                {t.label}
              </TrustItem>
            ))}
          </Trust>
        </Container>
      </Footer>
    </Page>
  );
}
